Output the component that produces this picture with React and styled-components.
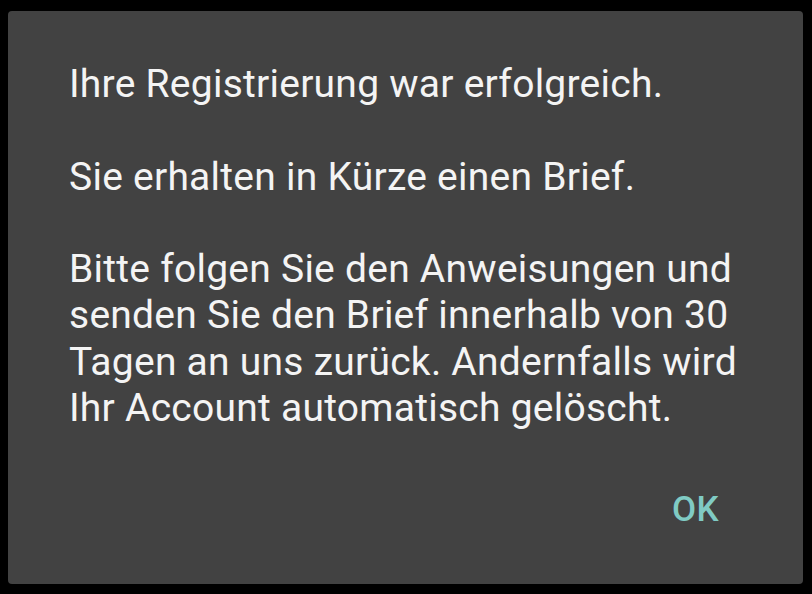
import React from "react";
import styled, { createGlobalStyle } from "styled-components";

const Global = createGlobalStyle`
  html, body { margin: 0; padding: 0; background: #000; }
  body { width: 812px; height: 594px; overflow: hidden; }
`;

const Screen = styled.div`
  width: 812px;
  height: 594px;
  box-sizing: border-box;
  padding: 11px 9px 10px 8px;
  background: #000;
  display: flex;
`;

const Dialog = styled.div`
  flex: 1;
  background: #424242;
  border-radius: 4px;
  display: flex;
  flex-direction: column;
  padding: 50px 30px 0 61px;
  font-family: Roboto, "Noto Sans", sans-serif;
`;

const Message = styled.div`
  color: #f4f4f4;
  font-size: 39px;
  letter-spacing: 0.25px;
  line-height: 46.3px;
  white-space: pre-line;
`;

const Actions = styled.div`
  display: flex;
  justify-content: flex-end;
  margin-top: 59px;
`;

const TextButton = styled.button`
  background: none;
  border: none;
  padding: 0 54px 0 0;
  color: #80cbc4;
  font-family: Roboto, "Noto Sans", sans-serif;
  font-weight: 500;
  font-size: 35px;
  letter-spacing: 0.4px;
  line-height: 40px;
  cursor: pointer;
`;

export default function App() {
  return (
    <>
      <Global />
      <Screen>
        <Dialog>
          <Message>
            {"Ihre Registrierung war erfolgreich.\n\nSie erhalten in Kürze einen Brief.\n\nBitte folgen Sie den Anweisungen und\nsenden Sie den Brief innerhalb von 30\nTagen an uns zurück. Andernfalls wird\nIhr Account automatisch gelöscht."}
          </Message>
          <Actions>
            <TextButton>OK</TextButton>
          </Actions>
        </Dialog>
      </Screen>
    </>
  );
}
